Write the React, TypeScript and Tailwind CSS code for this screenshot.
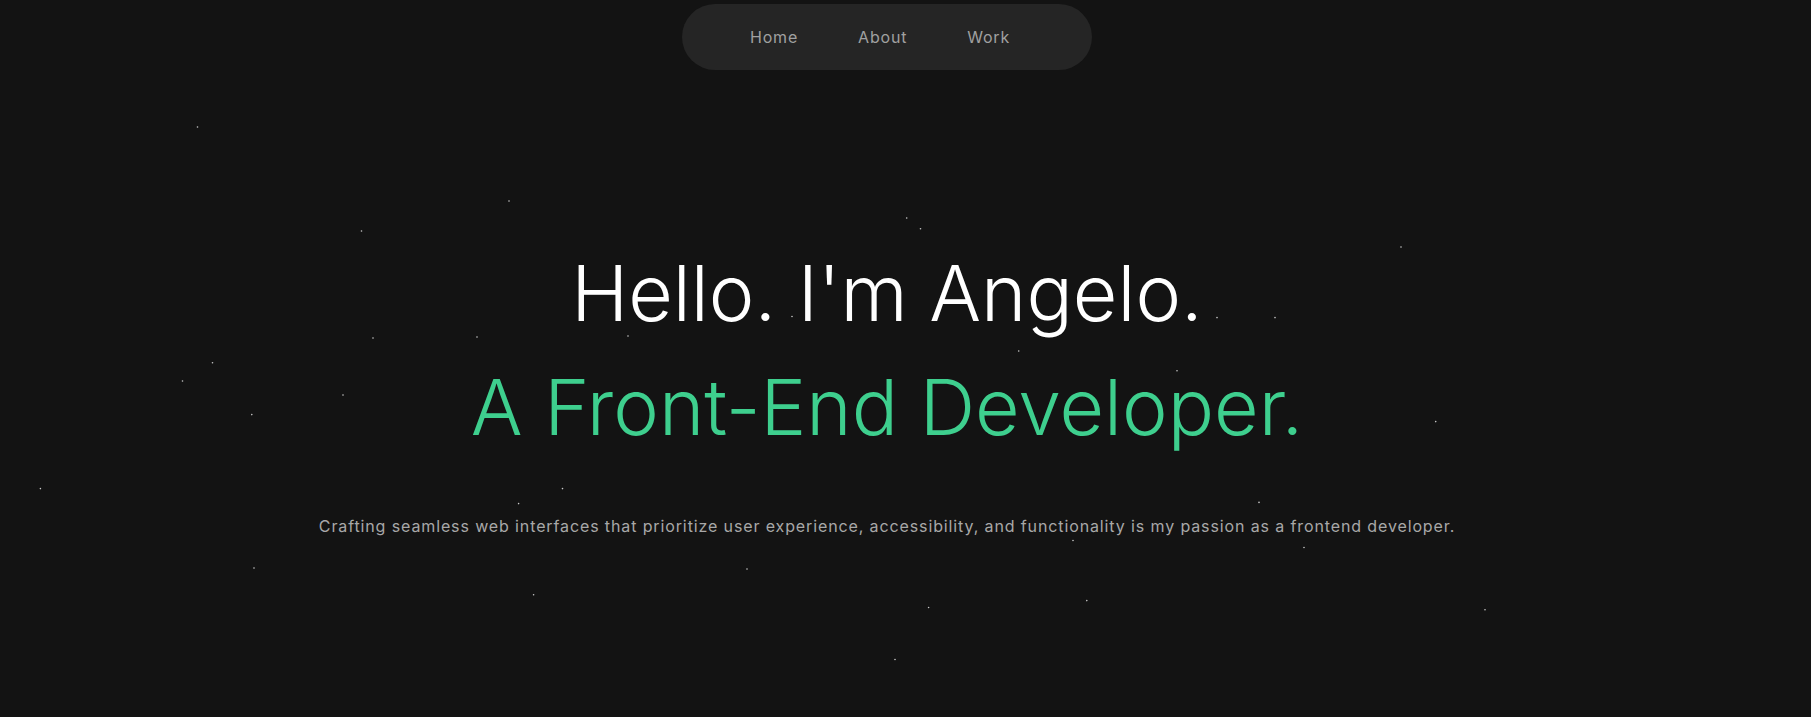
import React from "react";

const stars: [number, number][] = [
  [197.5, 127], [509, 201], [361.5, 231], [906.7, 218], [920.5, 228.7],
  [1401, 247], [373, 338], [477, 337], [628, 336], [792, 316.5],
  [1217, 317.6], [1275, 317.6], [212.5, 362.7], [182.5, 381], [343, 395],
  [251.8, 414.6], [1018.7, 351], [1177, 370.8], [1435.7, 421.6], [40.4, 488.6],
  [562.5, 488.6], [518.6, 503.6], [1259, 502.4], [1073, 540.5], [1304, 547.5],
  [254, 568], [747, 569], [533.6, 594.8], [928.6, 607.5], [1086.8, 600.6],
  [1485, 609.8], [895, 659.5],
];

export default function App() {
  return (
    <div
      className="relative h-[717px] w-full overflow-hidden bg-[#131313]"
      style={{ fontFamily: "Inter, 'Noto Sans', sans-serif" }}
    >
      <svg
        className="pointer-events-none absolute inset-0 h-full w-full"
        width="1811"
        height="717"
      >
        {stars.map(([x, y], i) => (
          <circle key={i} cx={x} cy={y} r={0.8} fill="#c8c8c8" />
        ))}
      </svg>
      <div className="relative flex w-full flex-col items-center pr-[37px]">
        <nav className="mt-1 flex h-[66px] items-center gap-[60px] rounded-[33px] bg-[#252525] pl-[68px] pr-[82px]">
          <a className="text-[16px] tracking-wider text-[#a0a0a0]">Home</a>
          <a className="text-[16px] tracking-wider text-[#a0a0a0]">About</a>
          <a className="text-[16px] tracking-wider text-[#a0a0a0]">Work</a>
        </nav>
        <h1 className="mt-[185px] text-[77px] font-light leading-none text-white">
          Hello. I'm Angelo.
        </h1>
        <h2 className="mt-[37px] text-[77px] font-light leading-none text-[#3ecf8e]">
          A Front-End Developer.
        </h2>
        <p className="mt-[68px] text-[16px] leading-6 tracking-[0.055em] text-[#a8a8a8]">
          Crafting seamless web interfaces that prioritize user experience, accessibility, and functionality is my passion as a frontend developer.
        </p>
      </div>
    </div>
  );
}
